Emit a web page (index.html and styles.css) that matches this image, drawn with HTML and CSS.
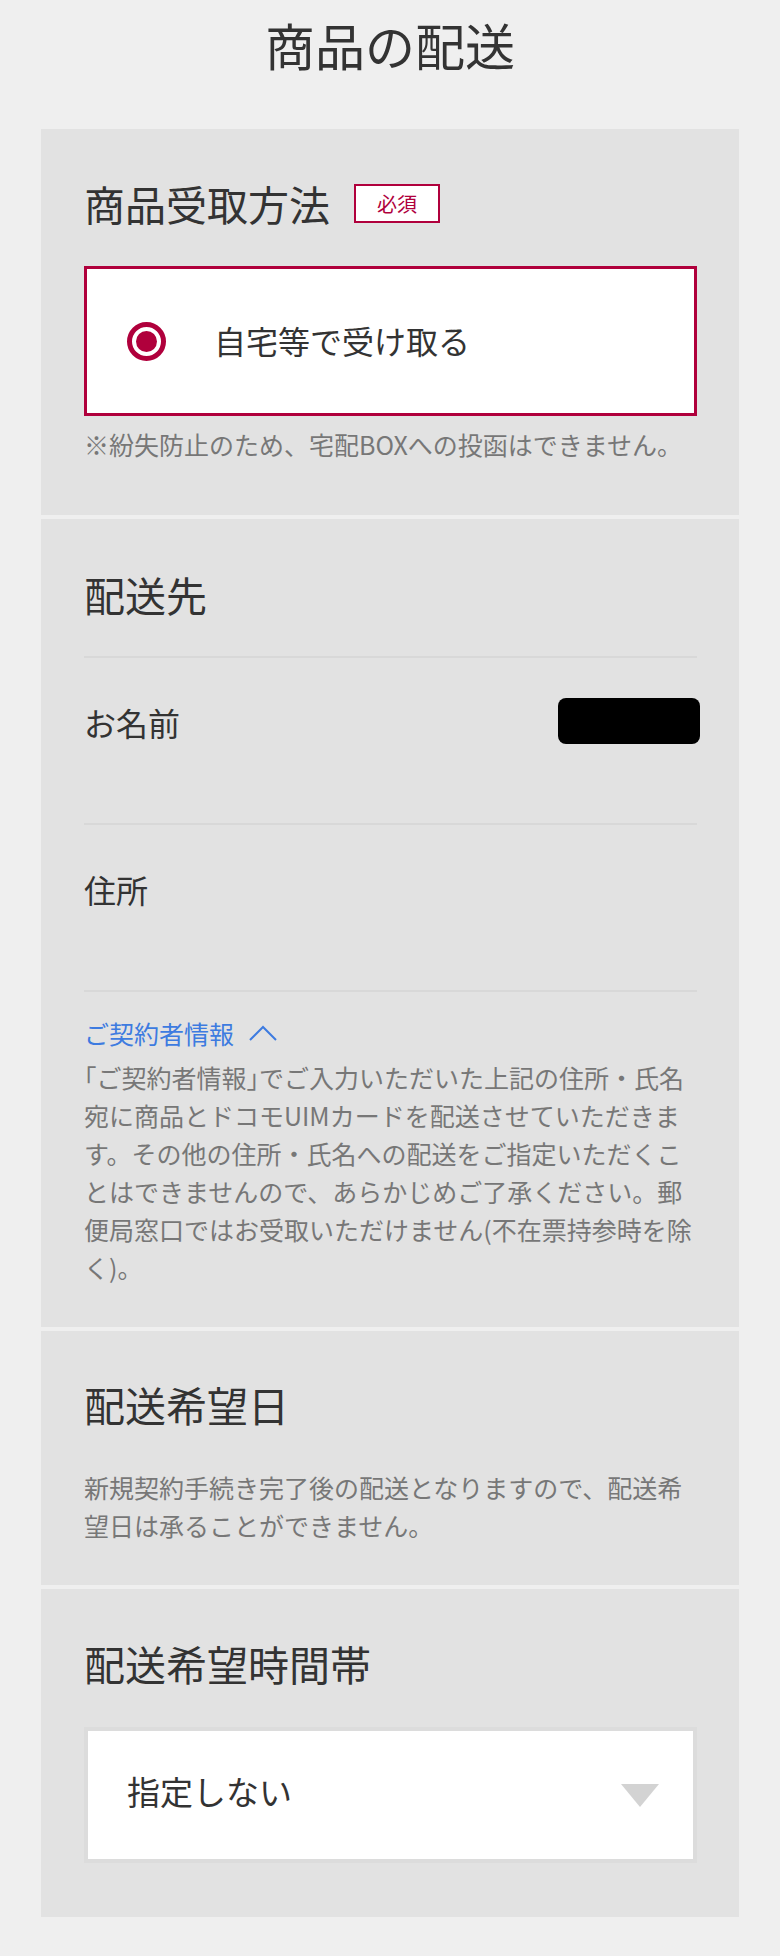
FILE: index.html
```html
<!DOCTYPE html>
<html lang="ja">
<head>
    <meta charset="UTF-8">
    <meta name="viewport" content="width=device-width, initial-scale=1.0">
    <title>商品の配送</title>
    <link rel="stylesheet" href="styles.css">
</head>
<body>
    <h1 class="page-title">商品の配送</h1>

    <!-- 受取方法 -->
    <section class="card card-receive">
        <div class="card-head">
            <h2 class="card-title">商品受取方法</h2>
            <span class="badge">必須</span>
        </div>
        <label class="radio-box">
            <span class="radio"></span>
            <span class="radio-label">自宅等で受け取る</span>
        </label>
        <p class="note">※紛失防止のため、宅配BOXへの投函はできません。</p>
    </section>

    <!-- 配送先 -->
    <section class="card card-address">
        <h2 class="card-title">配送先</h2>
        <div class="addr-list">
            <div class="addr-row">
                <span class="addr-label">お名前</span>
                <span class="redacted"></span>
            </div>
            <div class="addr-row">
                <span class="addr-label">住所</span>
            </div>
        </div>
        <a class="toggle" href="#">ご契約者情報
            <svg class="chevron" width="30" height="18" viewBox="0 0 30 18">
                <polyline points="2,16 15,3 28,16" fill="none" stroke="#3d7be0" stroke-width="2"/>
            </svg>
        </a>
        <p class="note contract-note"><span class="quote">「ご契約者情報」</span>でご入力いただいた上記の住所・氏名宛に商品とドコモUIMカードを配送させていただきます。その他の住所・氏名への配送をご指定いただくことはできませんので、あらかじめご了承ください。郵便局窓口ではお受取いただけません(不在票持参時を除く)。</p>
    </section>

    <!-- 配送希望日 -->
    <section class="card card-date">
        <h2 class="card-title">配送希望日</h2>
        <p class="note">新規契約手続き完了後の配送となりますので、配送希望日は承ることができません。</p>
    </section>

    <!-- 配送希望時間帯 -->
    <section class="card card-time">
        <h2 class="card-title">配送希望時間帯</h2>
        <div class="select">
            <span class="select-value">指定しない</span>
            <svg class="select-arrow" width="38" height="23" viewBox="0 0 38 23">
                <polygon points="0,0 38,0 19,23" fill="#d3d3d3"/>
            </svg>
        </div>
    </section>
</body>
</html>
```

FILE: styles.css
```css
body {
    margin: 0;
    background: #efefef;
    font-family: "Noto Sans CJK JP", "Noto Sans", sans-serif;
    color: #333;
}

.page-title {
    margin: 7px 0 47px;
    font-size: 50px;
    font-weight: normal;
    line-height: 75px;
    text-align: center;
}

.card {
    margin: 0 41px 4px;
    padding: 44px 42px 52px 43px;
    background: #e2e2e2;
}

.card-title {
    margin: 0;
    font-size: 41px;
    font-weight: normal;
    line-height: 60px;
}

.card-head {
    display: flex;
    align-items: center;
}

.badge {
    display: inline-flex;
    align-items: center;
    justify-content: center;
    box-sizing: border-box;
    width: 86px;
    height: 39px;
    margin-left: 24px;
    border: 2px solid #b0003c;
    background: #fff;
    color: #b0003c;
    font-size: 20px;
}

.radio-box {
    display: flex;
    align-items: center;
    box-sizing: border-box;
    height: 150px;
    margin-top: 33px;
    padding-left: 40px;
    border: 3px solid #b0003c;
    background: #fff;
}

.radio {
    display: flex;
    align-items: center;
    justify-content: center;
    box-sizing: border-box;
    width: 39px;
    height: 39px;
    border: 5px solid #b0003c;
    border-radius: 50%;
}

.radio::after {
    content: "";
    width: 21px;
    height: 21px;
    border-radius: 50%;
    background: #b0003c;
}

.radio-label {
    margin: 0 0 3px 48px;
    font-size: 32px;
}

.note {
    margin: 9px 0 0;
    font-size: 25px;
    line-height: 38px;
    color: #777;
}

/* 配送先 */
.card-address {
    padding: 45px 42px 41px 43px;
}

.addr-list {
    margin-top: 32px;
    border-bottom: 2px solid #d8d8d8;
}

.addr-row {
    display: flex;
    justify-content: space-between;
    align-items: flex-start;
    padding: 40px 0 77px;
    border-top: 2px solid #d8d8d8;
}

.addr-label {
    font-size: 32px;
    line-height: 48px;
}

.redacted {
    width: 142px;
    height: 46px;
    margin-right: -3px;
    border-radius: 8px;
    background: #000;
}

.toggle {
    display: flex;
    align-items: center;
    margin-top: 22px;
    font-size: 25px;
    line-height: 38px;
    color: #3d7be0;
    text-decoration: none;
}

.chevron {
    margin-left: 14px;
}

.contract-note {
    margin-top: 6px;
}

/* half-width brackets, like the original */
.quote {
    font-feature-settings: "halt";
}

/* 配送希望日 */
.card-date {
    padding: 43px 42px 41px 43px;
}

.card-date .note {
    margin-top: 34px;
}

/* 配送希望時間帯 */
.card-time {
    padding: 44px 42px 54px 43px;
}

.select {
    display: flex;
    align-items: center;
    justify-content: space-between;
    box-sizing: border-box;
    height: 136px;
    margin-top: 34px;
    padding: 0 34px 0 39px;
    border: 4px solid #dcdcdc;
    background: #fff;
}

.select-value {
    margin-bottom: 8px;
    font-size: 33px;
}
```
